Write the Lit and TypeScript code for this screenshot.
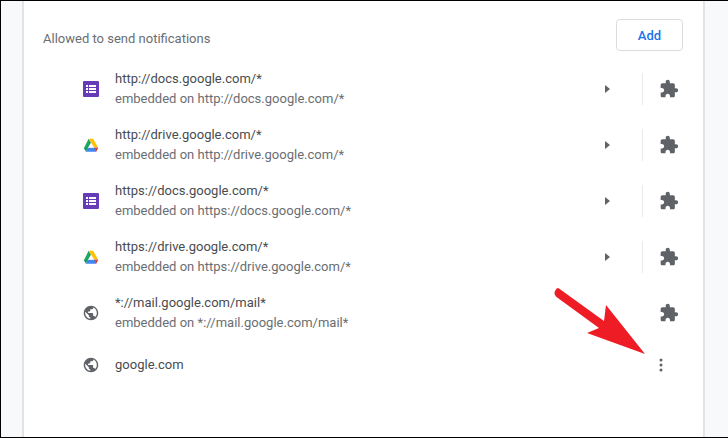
import { LitElement, html, css, svg } from "lit";
import { customElement } from "lit/decorators.js";

const forms = svg`<svg class="ico" viewBox="0 0 16 16"><rect width="16" height="16" rx="1" fill="#673ab7"/><g fill="#fff"><rect x="3" y="4" width="2" height="2"/><rect x="6" y="4" width="7" height="2"/><rect x="3" y="7" width="2" height="2"/><rect x="6" y="7" width="7" height="2"/><rect x="3" y="10" width="2" height="2"/><rect x="6" y="10" width="7" height="2"/></g></svg>`;
const drive = svg`<svg class="ico" viewBox="0 0 16 16"><path d="M5.6 1.8 L8 5.8 L4.6 11.6 L.8 11.6 Z" fill="#1fa463"/><path d="M5.6 1.8 H10.2 L15 10.6 H11.2 Z" fill="#ffc107"/><path d="M2.9 14.8 L4.5 10.8 H15.2 L13.1 14.8 Z" fill="#4285f4"/><path d="M.8 11 L4.6 11 L2.9 14.8 Z" fill="#0f9d58"/><path d="M11.2 10.8 H15.2 L13.1 14.8 Z" fill="#ea4335"/><path d="M8 6.2 L10.6 10.6 H5.4 Z" fill="#fff"/></svg>`;
const globe = svg`<svg class="ico" viewBox="1 1 22 22"><path fill="#5f6368" d="M12 2C6.48 2 2 6.48 2 12s4.48 10 10 10 10-4.48 10-10S17.52 2 12 2zm-1 17.93c-3.95-.49-7-3.85-7-7.93 0-.62.08-1.21.21-1.79L9 15v1c0 1.1.9 2 2 2v1.93zm6.9-2.54c-.26-.81-1-1.39-1.9-1.39h-1v-3c0-.55-.45-1-1-1H8v-2h2c.55 0 1-.45 1-1V7h2c1.1 0 2-.9 2-2v-.41c2.93 1.19 5 4.06 5 7.41 0 2.08-.8 3.97-2.1 5.39z"/></svg>`;
const puzzle = svg`<svg class="puz" viewBox="0 0 24 24"><path fill="#5f6368" d="M20.5 11H19V7c0-1.1-.9-2-2-2h-4V3.5C13 2.12 11.88 1 10.5 1S8 2.12 8 3.5V5H4c-1.1 0-1.99.9-1.99 2v3.8H3.5c1.49 0 2.7 1.21 2.7 2.7s-1.21 2.7-2.7 2.7H2V20c0 1.1.9 2 2 2h3.8v-1.5c0-1.49 1.21-2.7 2.7-2.7s2.7 1.21 2.7 2.7V22H17c1.1 0 2-.9 2-2v-4h1.5c1.38 0 2.5-1.12 2.5-2.5S21.88 11 20.5 11z"/></svg>`;

const rows = [
  { ic: forms, a: "http://docs.google.com/*", sep: true },
  { ic: drive, a: "http://drive.google.com/*", sep: true },
  { ic: forms, a: "https://docs.google.com/*", sep: true },
  { ic: drive, a: "https://drive.google.com/*", sep: true },
  { ic: globe, a: "*://mail.google.com/mail*", sep: false },
];

@customElement("app-root")
export class AppRoot extends LitElement {
  static styles = css`
    :host { display: block; position: relative; width: 728px; height: 438px; box-sizing: border-box;
      overflow: hidden; background: #f8f9fa; border-top: 1px solid #000; border-left: 1px solid #000; border-bottom: 1px solid #000;
      font-family: Roboto, sans-serif; font-size: 13px; color: #6a6e72; }
    .card { box-sizing: border-box; margin-left: 21px; width: 683px; height: 436px; background: #fff;
      border-left: 2px solid #e3e4e6; border-right: 2px solid #e3e4e6; padding: 18px 20px 0 19px; }
    .head { display: flex; align-items: center; justify-content: space-between; height: 32px; margin-bottom: 10px; }
    .title { padding-top: 6px; }
    .add { box-sizing: border-box; width: 67px; height: 32px; border: 1px solid #dadce0; border-radius: 4px;
      display: flex; align-items: center; justify-content: center; color: #1a73e8; font-weight: 500; }
    .row { display: flex; align-items: center; height: 56px; padding-left: 40px; }
    .row.last { height: 48px; }
    .ico { width: 16px; height: 16px; flex: none; }
    .txt { flex: 1; margin-left: 16px; line-height: 20px; color: #484c50; letter-spacing: .01px; }
    .sub { color: #6a6e72; }
    .tri { width: 0; height: 0; border-left: 5px solid #5f6368; border-top: 4px solid transparent; border-bottom: 4px solid transparent; margin-right: 32px; }
    .sep { width: 1px; height: 32px; background: #e8eaed; }
    .nosep { width: 1px; height: 32px; }
    .act { width: 52px; display: flex; justify-content: center; margin-right: -12px; }
    .more { width: 44px; display: flex; justify-content: center; }
    .puz { width: 20px; height: 20px; }
    .dots { width: 20px; height: 20px; }
    .arrow { position: absolute; left: 550px; top: 280px; width: 100px; height: 80px; }
  `;

  render() {
    return html`
      <div class="card">
        <div class="head"><span class="title">Allowed to send notifications</span><span class="add">Add</span></div>
        ${rows.map((r) => html`
          <div class="row">
            ${r.ic}
            <div class="txt"><div>${r.a}</div><div class="sub">embedded on ${r.a}</div></div>
            ${r.sep ? html`<span class="tri"></span><span class="sep"></span>` : html`<span class="nosep"></span>`}
            <span class="act">${puzzle}</span>
          </div>`)}
        <div class="row last">
          ${globe}
          <div class="txt">google.com</div>
          <span class="more"><svg class="dots" viewBox="0 0 20 20"><g fill="#5f6368"><circle cx="10" cy="5" r="1.5"/><circle cx="10" cy="10" r="1.5"/><circle cx="10" cy="15" r="1.5"/></g></svg></span>
        </div>
      </div>
      <svg class="arrow" viewBox="0 0 100 80">
        <path fill="#ee1c25" d="M8 7.5 L53 40 L55 24 L94 73 L36 52 L48 47 L5.5 16 Q2.5 13 4 10 Q6 6 8 7.5 Z"/>
      </svg>
    `;
  }
}
